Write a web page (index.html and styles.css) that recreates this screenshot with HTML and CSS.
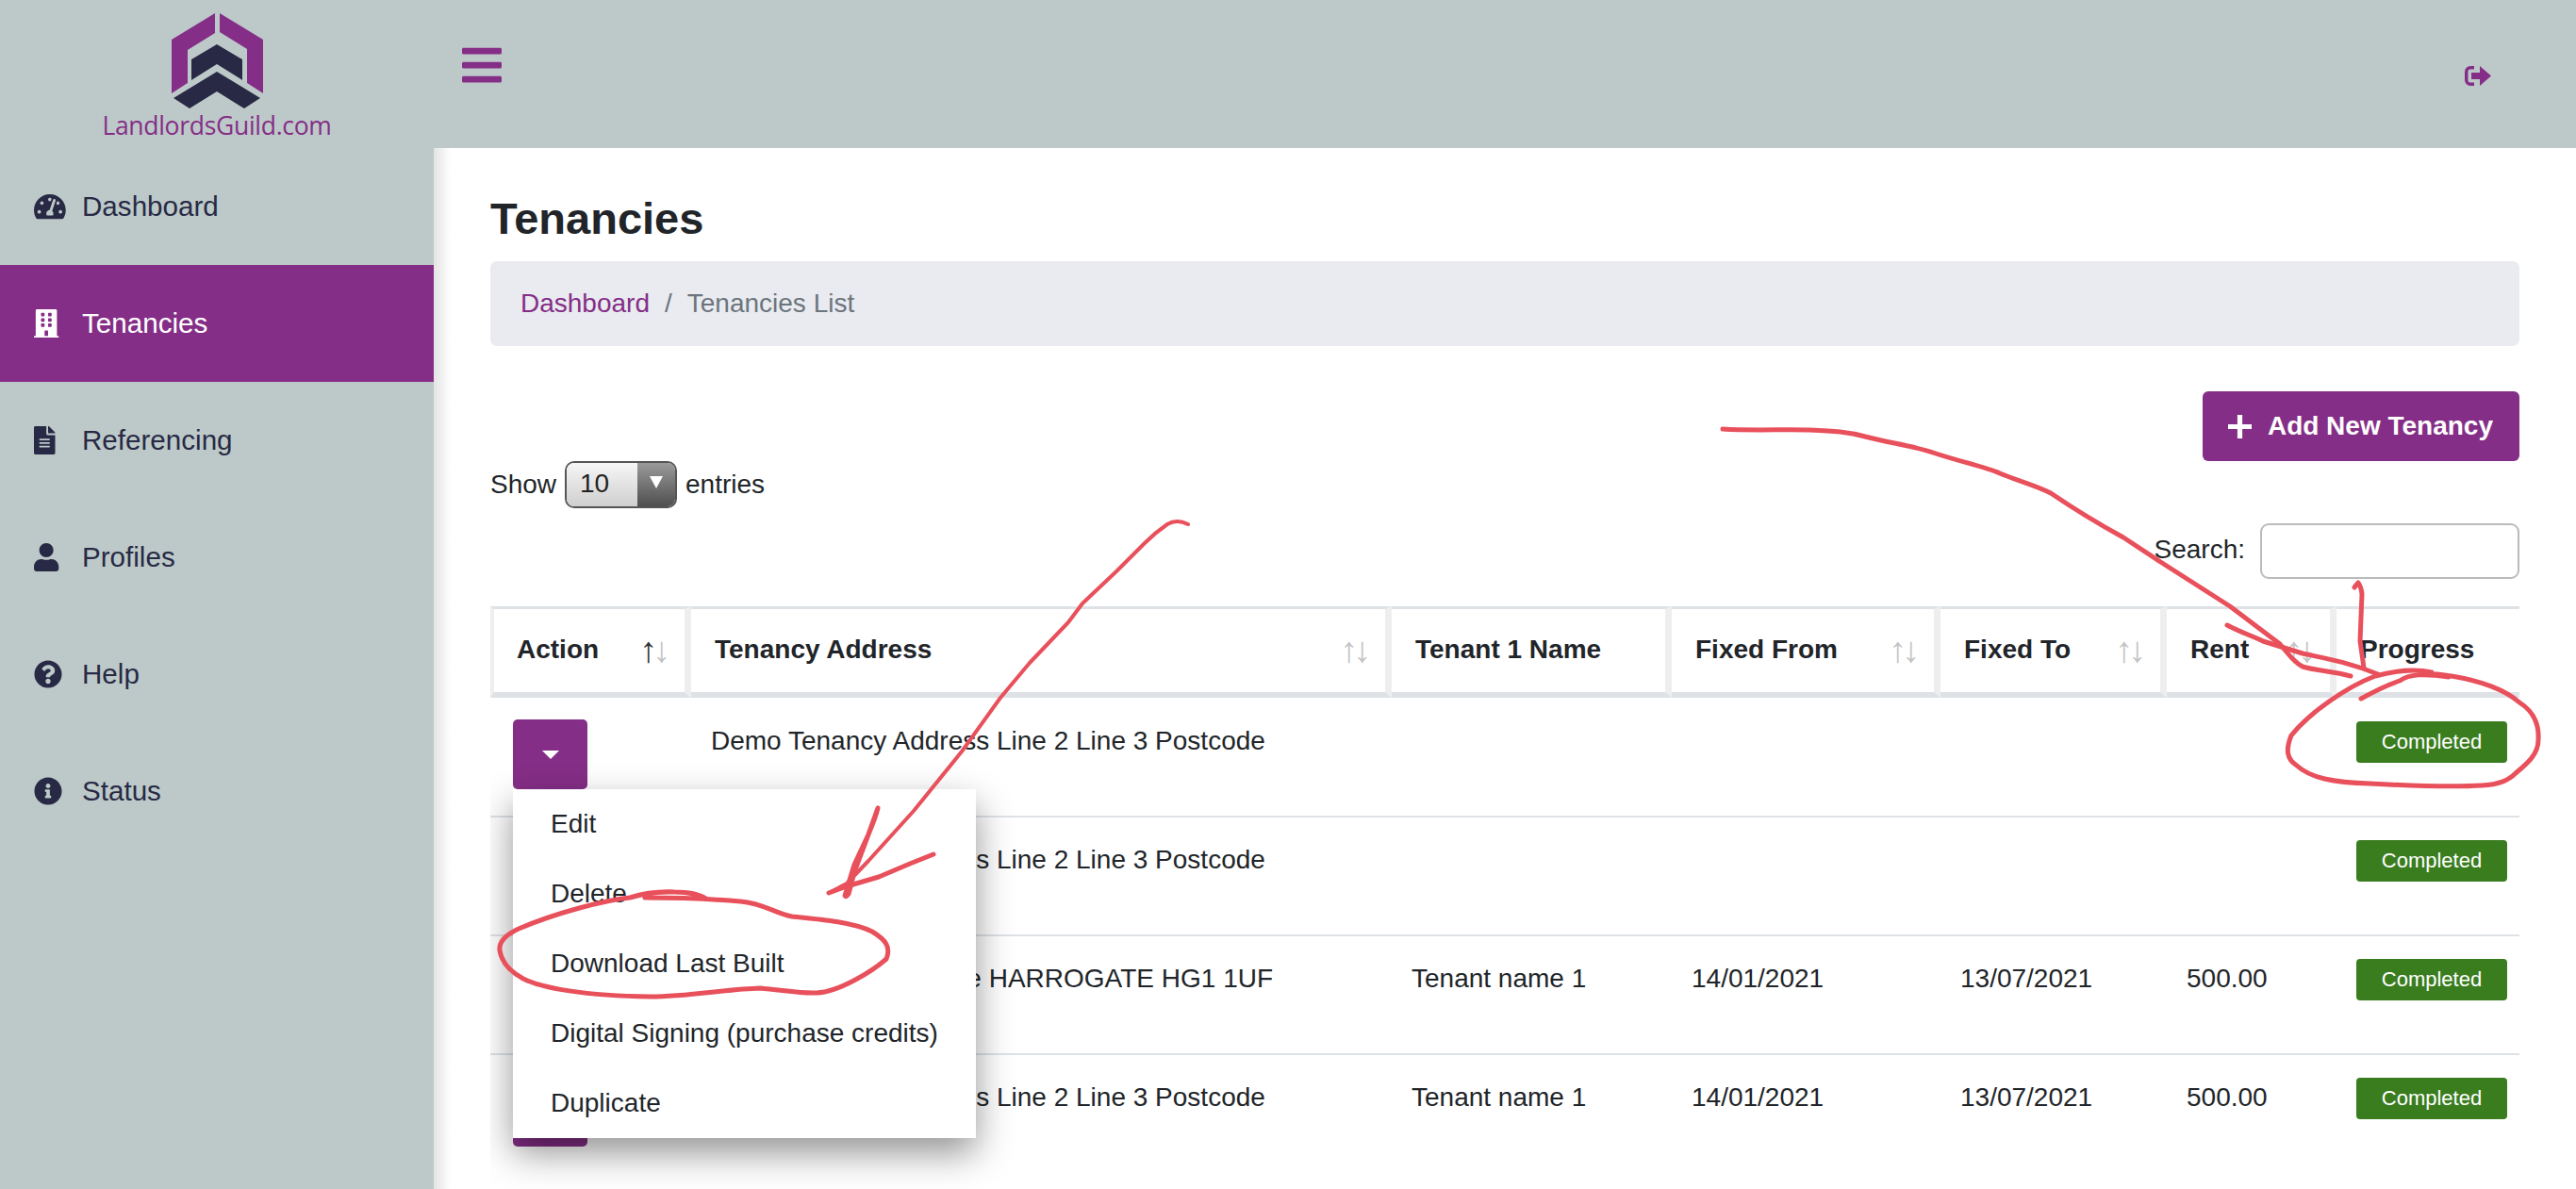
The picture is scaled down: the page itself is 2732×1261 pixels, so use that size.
FILE: index.html
```html
<!DOCTYPE html>
<html>
<head>
<meta charset="utf-8">
<title>Tenancies</title>
<link rel="stylesheet" href="styles.css">
</head>
<body>
<div class="app">
  <aside class="sidebar">
    <div class="logo">
      <svg class="logo-mark" viewBox="182 14 97 101" width="97" height="101">
        <path fill="#852e87" d="M228 14 182 42V99L199 88V53L228 35ZM233 14 279 42V99L262 88V52L233 34Z"/>
        <path fill="#282a45" d="M230 47 257 63V85L230 68 203 85V63ZM230 76 276 104 259 115 230 97 201 115 184 104Z"/>
      </svg>
      <div class="logo-text">LandlordsGuild.com</div>
    </div>
    <nav class="nav">
      <a class="nav-item">
        <svg class="nav-icon" preserveAspectRatio="xMinYMid meet" viewBox="0 0 576 512"><path d="M288 32C128.94 32 0 160.94 0 320c0 52.8 14.25 102.26 39.06 144.8 5.61 9.62 16.3 15.2 27.44 15.2h443c11.14 0 21.83-5.58 27.44-15.2C561.75 422.26 576 372.8 576 320c0-159.06-128.94-288-288-288zm0 64c14.71 0 26.58 10.13 30.32 23.65-1.11 2.26-2.64 4.23-3.45 6.67l-9.22 27.67c-5.13 3.49-10.97 6.01-17.64 6.01-17.67 0-32-14.33-32-32S270.33 96 288 96zM96 384c-17.67 0-32-14.33-32-32s14.33-32 32-32 32 14.33 32 32-14.33 32-32 32zm48-160c-17.67 0-32-14.33-32-32s14.33-32 32-32 32 14.33 32 32-14.33 32-32 32zm246.77-72.41l-61.33 184C343.13 347.33 352 364.54 352 384c0 11.72-3.38 22.55-8.88 32H232.88c-5.5-9.45-8.88-20.28-8.88-32 0-33.94 26.5-61.43 59.9-63.59l61.34-184.01c4.17-12.56 17.73-19.45 30.36-15.17 12.57 4.19 19.35 17.79 15.17 30.36zm14.66 57.2l15.52-46.55c3.47-1.29 7.13-2.23 11.05-2.23 17.67 0 32 14.33 32 32s-14.33 32-32 32c-11.38-.01-20.89-6.28-26.57-15.22zM480 384c-17.67 0-32-14.33-32-32s14.33-32 32-32 32 14.33 32 32-14.33 32-32 32z"/></svg>
        Dashboard
      </a>
      <a class="nav-item active">
        <svg class="nav-icon" preserveAspectRatio="xMinYMid meet" viewBox="0 0 448 512"><path d="M436 480h-20V24c0-13.255-10.745-24-24-24H56C42.745 0 32 10.745 32 24v456H12c-6.627 0-12 5.373-12 12v20h448v-20c0-6.627-5.373-12-12-12zM128 76c0-6.627 5.373-12 12-12h40c6.627 0 12 5.373 12 12v40c0 6.627-5.373 12-12 12h-40c-6.627 0-12-5.373-12-12V76zm0 96c0-6.627 5.373-12 12-12h40c6.627 0 12 5.373 12 12v40c0 6.627-5.373 12-12 12h-40c-6.627 0-12-5.373-12-12v-40zm52 148h-40c-6.627 0-12-5.373-12-12v-40c0-6.627 5.373-12 12-12h40c6.627 0 12 5.373 12 12v40c0 6.627-5.373 12-12 12zm76 160h-64v-84c0-6.627 5.373-12 12-12h40c6.627 0 12 5.373 12 12v84zm64-172c0 6.627-5.373 12-12 12h-40c-6.627 0-12-5.373-12-12v-40c0-6.627 5.373-12 12-12h40c6.627 0 12 5.373 12 12v40zm0-96c0 6.627-5.373 12-12 12h-40c-6.627 0-12-5.373-12-12v-40c0-6.627 5.373-12 12-12h40c6.627 0 12 5.373 12 12v40zm0-96c0 6.627-5.373 12-12 12h-40c-6.627 0-12-5.373-12-12V76c0-6.627 5.373-12 12-12h40c6.627 0 12 5.373 12 12v40z"/></svg>
        Tenancies
      </a>
      <a class="nav-item">
        <svg class="nav-icon" preserveAspectRatio="xMinYMid meet" viewBox="0 0 384 512"><path d="M224 136V0H24C10.7 0 0 10.7 0 24v464c0 13.3 10.7 24 24 24h336c13.3 0 24-10.7 24-24V160H248c-13.2 0-24-10.8-24-24zm64 236c0 6.6-5.4 12-12 12H108c-6.6 0-12-5.4-12-12v-8c0-6.6 5.4-12 12-12h168c6.6 0 12 5.4 12 12v8zm0-64c0 6.6-5.4 12-12 12H108c-6.6 0-12-5.4-12-12v-8c0-6.6 5.4-12 12-12h168c6.6 0 12 5.4 12 12v8zm0-72v8c0 6.6-5.4 12-12 12H108c-6.6 0-12-5.4-12-12v-8c0-6.6 5.4-12 12-12h168c6.6 0 12 5.4 12 12zm96-114.1v6.1H256V0h6.1c6.4 0 12.5 2.5 17 7l97.9 98c4.5 4.5 7 10.6 7 16.9z"/></svg>
        Referencing
      </a>
      <a class="nav-item">
        <svg class="nav-icon" preserveAspectRatio="xMinYMid meet" viewBox="0 0 448 512"><path d="M224 256c70.7 0 128-57.3 128-128S294.7 0 224 0 96 57.3 96 128s57.3 128 128 128zm89.6 32h-16.7c-22.2 10.2-46.9 16-72.9 16s-50.6-5.8-72.9-16h-16.7C60.2 288 0 348.2 0 422.4V464c0 26.5 21.5 48 48 48h352c26.5 0 48-21.5 48-48v-41.6c0-74.2-60.2-134.4-134.4-134.4z"/></svg>
        Profiles
      </a>
      <a class="nav-item">
        <svg class="nav-icon" preserveAspectRatio="xMinYMid meet" viewBox="0 0 512 512"><path d="M504 256c0 136.997-111.043 248-248 248S8 392.997 8 256C8 119.083 119.043 8 256 8s248 111.083 248 248zM262.655 90c-54.497 0-89.255 22.957-116.549 63.758-3.536 5.286-2.353 12.415 2.715 16.258l34.699 26.31c5.205 3.947 12.621 3.008 16.665-2.122 17.864-22.658 30.113-35.797 57.303-35.797 20.429 0 45.698 13.148 45.698 32.958 0 14.976-12.363 22.667-32.534 33.976C247.128 238.528 216 254.941 216 296v4c0 6.627 5.373 12 12 12h56c6.627 0 12-5.373 12-12v-1.333c0-28.462 83.186-29.647 83.186-106.667 0-58.002-60.165-102-116.531-102zM256 338c-25.365 0-46 20.635-46 46 0 25.364 20.635 46 46 46s46-20.636 46-46c0-25.365-20.635-46-46-46z"/></svg>
        Help
      </a>
      <a class="nav-item">
        <svg class="nav-icon" preserveAspectRatio="xMinYMid meet" viewBox="0 0 512 512"><path d="M256 8C119.043 8 8 119.083 8 256c0 136.997 111.043 248 248 248s248-111.003 248-248C504 119.083 392.957 8 256 8zm0 110c23.196 0 42 18.804 42 42s-18.804 42-42 42-42-18.804-42-42 18.804-42 42-42zm56 254c0 6.627-5.373 12-12 12h-88c-6.627 0-12-5.373-12-12v-24c0-6.627 5.373-12 12-12h12v-64h-12c-6.627 0-12-5.373-12-12v-24c0-6.627 5.373-12 12-12h64c6.627 0 12 5.373 12 12v100h12c6.627 0 12 5.373 12 12v24z"/></svg>
        Status
      </a>
    </nav>
  </aside>

  <div class="main">
    <header class="topbar">
      <svg class="menu-icon" viewBox="0 0 448 512"><path d="M16 132h416c8.837 0 16-7.163 16-16V76c0-8.837-7.163-16-16-16H16C7.163 60 0 67.163 0 76v40c0 8.837 7.163 16 16 16zm0 160h416c8.837 0 16-7.163 16-16v-40c0-8.837-7.163-16-16-16H16c-8.837 0-16 7.163-16 16v40c0 8.837 7.163 16 16 16zm0 160h416c8.837 0 16-7.163 16-16v-40c0-8.837-7.163-16-16-16H16c-8.837 0-16 7.163-16 16v40c0 8.837 7.163 16 16 16z"/></svg>
      <svg class="logout-icon" viewBox="0 0 28 21"><path d="M10 0H6a6 6 0 0 0-6 6v9a6 6 0 0 0 6 6h4v-3.500H6A2.500 2.500 0 0 1 3.500 15V6A2.500 2.500 0 0 1 6 3.500h4zM7 7h9V0l12 10.500L16 21v-7H7z"/></svg>
    </header>

    <section class="content">
      <h1 class="page-title">Tenancies</h1>
      <div class="breadcrumb">
        <a class="crumb-link">Dashboard</a>
        <span class="crumb-sep">/</span>
        <span class="crumb-here">Tenancies List</span>
      </div>

      <div class="actions">
        <a class="btn-add">
          <svg class="plus-icon" viewBox="0 0 24 24"><path d="M9.500 0h5v9.500H24v5h-9.500V24h-5v-9.500H0v-5h9.500z"/></svg>
          Add New Tenancy
        </a>
      </div>

      <div class="dt-tools">
        <div class="dt-length">
          Show
          <div class="len-select">
            <span class="len-value">10</span>
            <span class="len-arrow"></span>
          </div>
          entries
        </div>
        <label class="dt-search"><span class="search-label">Search:</span> <input type="text" class="search-box"></label>
      </div>

      <div class="table-wrap">
        <table class="tenancy-table">
          <colgroup>
            <col class="col-action"><col class="col-address"><col class="col-tenant"><col class="col-from"><col class="col-to"><col class="col-rent"><col class="col-progress">
          </colgroup>
          <thead>
            <tr>
              <th><div class="th-in">Action<span class="sort"><span class="on">↑</span>↓</span></div></th>
              <th><div class="th-in">Tenancy Address<span class="sort">↑↓</span></div></th>
              <th><div class="th-in">Tenant 1 Name</div></th>
              <th><div class="th-in">Fixed From<span class="sort">↑↓</span></div></th>
              <th><div class="th-in">Fixed To<span class="sort">↑↓</span></div></th>
              <th><div class="th-in">Rent<span class="sort">↑↓</span></div></th>
              <th><div class="th-in">Progress</div></th>
            </tr>
          </thead>
          <tbody>
            <tr>
              <td class="cell-action">
                <a class="btn-menu"><span class="caret"></span></a>
                <ul class="menu">
                  <li>Edit</li>
                  <li>Delete</li>
                  <li>Download Last Built</li>
                  <li>Digital Signing (purchase credits)</li>
                  <li>Duplicate</li>
                </ul>
              </td>
              <td>Demo Tenancy Address Line 2 Line 3 Postcode</td>
              <td></td><td></td><td></td><td></td>
              <td><span class="badge">Completed</span></td>
            </tr>
            <tr>
              <td class="cell-action"><a class="btn-menu"><span class="caret"></span></a></td>
              <td>Demo Tenancy Address Line 2 Line 3 Postcode</td>
              <td></td><td></td><td></td><td></td>
              <td><span class="badge">Completed</span></td>
            </tr>
            <tr>
              <td class="cell-action"><a class="btn-menu"><span class="caret"></span></a></td>
              <td>Demo Tenancy Avenue HARROGATE HG1 1UF</td>
              <td>Tenant name 1</td><td>14/01/2021</td><td>13/07/2021</td><td>500.00</td>
              <td><span class="badge">Completed</span></td>
            </tr>
            <tr>
              <td class="cell-action"><a class="btn-menu"><span class="caret"></span></a></td>
              <td>Demo Tenancy Address Line 2 Line 3 Postcode</td>
              <td>Tenant name 1</td><td>14/01/2021</td><td>13/07/2021</td><td>500.00</td>
              <td><span class="badge">Completed</span></td>
            </tr>
          </tbody>
        </table>
      </div>
    </section>
  </div>
</div>

<!-- hand drawn notes on top of the screenshot -->
<svg class="scribbles" viewBox="0 0 2732 1261" width="2732" height="1261">
  <!-- arrow to the menu -->
  <path class="thin" d="M1260 556Q1248 550 1238 556Q1225 565 1214 576L1184 606 1148 640 1133 660 1092 703 1061 740 1020 797 969 860 921 913 898 937 879 947"/>
  <path d="M879 947L898 940 932 930 965 916 990 906"/>
  <path d="M931 857Q929 866 921 885L906 917 896 950Q897 952 900 948L906 925 921 885 931 857"/>
  <!-- ring round Download Last Built -->
  <path d="M749 953Q738 946 715 946Q690 945 668 952C640 955 590 968 550 985C535 992 529 1000 530 1008C532 1020 540 1030 555 1038C575 1048 620 1056 690 1057C730 1057 770 1049 806 1048C830 1050 850 1054 866 1053C890 1052 925 1030 940 1017C945 1005 940 997 925 988C905 978 870 975 840 972C820 968 810 958 785 956C750 953 715 952 684 952"/>
  <!-- arrow to the progress badge -->
  <path d="M1827 455C1860 457 1895 455 1919 456C1945 457 1960 458 1978 463C2005 470 2030 473 2050 480C2080 490 2105 495 2121 502C2140 510 2160 515 2175 523C2200 540 2230 558 2252 570L2293 597 2365 643 2418 683C2428 695 2434 703 2442 707C2455 711 2475 712 2493 717"/>
  <path d="M2362 663C2375 670 2390 675 2400 680L2442 693C2465 698 2490 702 2522 715"/>
  <path d="M2497 623Q2499 620 2501 618Q2504 622 2505 630L2503 680 2507 708"/>
  <path d="M2504 741C2520 732 2530 727 2545 722C2555 715 2570 714 2597 718"/>
  <path d="M2579 713C2565 710 2545 710 2519 717C2490 728 2450 755 2430 780C2424 795 2425 805 2436 812C2450 825 2475 830 2513 831C2550 833 2600 835 2632 833C2650 832 2660 828 2668 820C2680 810 2692 800 2692 785C2693 770 2688 755 2672 745C2655 730 2630 722 2600 717C2585 715 2580 714 2573 715"/>
</svg>
</body>
</html>
```
FILE: styles.css
```css
*{box-sizing:border-box;}
html,body{margin:0;padding:0;height:100%;}
body{
font-family:"Liberation Sans",Arial,sans-serif;
font-size:28px;
line-height:1.5;
color:#212529;
background:#fff;
overflow:hidden;
}
.app{display:flex;height:1261px;position:relative;}

/* sidebar */
.sidebar{width:460px;flex:none;background:#bdc9c9;}
.logo{height:157px;display:flex;flex-direction:column;align-items:center;padding-top:14px;}
.logo-mark{display:block;flex:none;margin-left:1px;}
.logo-text{
font-family:"Open Sans",sans-serif;
font-weight:400;
font-size:26.500px;
line-height:30px;
letter-spacing:-.3px;
color:#852e87;
margin-top:3px;
}
.nav-item{
height:124px;
display:flex;
align-items:center;
padding-left:36px;
font-size:29.600px;
color:#282a45;
}
.nav-item.active{background:#852e87;color:#fff;}
.nav-icon{width:34px;height:30px;margin-right:17px;fill:currentColor;flex:none;}

/* top bar */
.main{flex:1;display:flex;flex-direction:column;min-width:0;}
.topbar{
height:157px;
flex:none;
background:#bdc9c9;
display:flex;
align-items:flex-start;
justify-content:space-between;
padding:45px 90px 0 30px;
}
.menu-icon{width:42px;height:48px;fill:#852e87;}
.logout-icon{width:28px;height:21px;fill:#852e87;margin-top:25px;}

/* content */
.content{
flex:1;
min-height:0;
display:flex;
flex-direction:column;
padding:0 60px;
background:linear-gradient(to right,#e4e4e4,#fff 18px);
}
.page-title{font-size:47px;font-weight:700;line-height:56px;margin:47px 0 17px;}
.breadcrumb{
height:90px;
flex:none;
display:flex;
align-items:center;
padding-left:32px;
background:#e9ebf0;
border-radius:7px;
color:#6c757d;
}
.crumb-link{color:#852e87;}
.crumb-sep{margin:0 16px;}
.actions{display:flex;justify-content:flex-end;margin-top:48px;flex:none;}
.btn-add{
height:74px;
display:flex;
align-items:center;
padding:0 28px 0 27px;
background:#852e87;
color:#fff;
font-weight:700;
border-radius:6px;
}
.plus-icon{width:25px;height:25px;fill:#fff;margin-right:17px;}

.dt-tools{display:flex;justify-content:space-between;align-items:flex-start;flex:none;}
.dt-length{display:flex;align-items:center;height:50px;gap:9px;}
.len-select{
width:119px;
height:50px;
display:flex;
border:2px solid #555;
border-radius:10px;
overflow:hidden;
}
.len-value{
flex:1;
padding-left:14px;
line-height:44px;
background:linear-gradient(#f6f6f6,#cfcfcf);
color:#222;
}
.len-arrow{
width:40px;
background:linear-gradient(#9a9a9a,#4f4f4f);
display:flex;
align-items:center;
justify-content:center;
}
.len-arrow::after{
content:"";
border-left:7px solid transparent;
border-right:7px solid transparent;
border-top:13px solid #fff;
margin-bottom:6px;
}
.dt-search{display:flex;align-items:center;gap:16px;margin-top:66px;}
.search-label{margin-top:-4px;}
.search-box{
width:275px;
height:59px;
border:2px solid #bbb;
border-radius:9px;
background:#fff;
outline:none;
}

/* table */
.table-wrap{flex:1;min-height:0;overflow:hidden;margin-top:29px;}
.tenancy-table{
width:2152px;
table-layout:fixed;
border-collapse:separate;
border-spacing:0;
}
.col-action{width:213px;}
.col-address{width:743px;}
.col-tenant{width:297px;}
.col-from{width:285px;}
.col-to{width:240px;}
.col-rent{width:180px;}
.col-progress{width:194px;}
.tenancy-table th{
height:97px;
padding:0 10px 0 25px;
border-top:3px solid #dee2e6;
border-bottom:6px solid #dee2e6;
border-right:7px solid #eee;
text-align:left;
font-weight:700;
}
.tenancy-table th:first-child{border-left:4px solid #eee;padding-left:24px;}
.tenancy-table th:last-child{border-right:0;}
.th-in{display:flex;justify-content:space-between;align-items:center;margin-top:-3px;white-space:nowrap;height:42px;}
.sort{color:#c4c4c4;font-weight:400;font-size:38px;line-height:1;letter-spacing:-5px;margin-right:10px;}
.sort .on{color:#333;}
.tenancy-table td{
height:126px;
padding:24px 10px 0 21px;
vertical-align:top;
border-bottom:2px solid #dee2e6;
}
.tenancy-table tbody tr:first-child td{height:127px;padding-top:25px;}
.tenancy-table tbody tr:last-child td{border-bottom:0;}
.tenancy-table td.cell-action,
.tenancy-table tbody tr:first-child td.cell-action{padding:23px 0 0 24px;position:relative;}
.btn-menu{
display:flex;
width:79px;
height:74px;
align-items:center;
justify-content:center;
background:#852e87;
border-radius:5px;
}
.caret{
border-left:9px solid transparent;
border-right:9px solid transparent;
border-top:9px solid #fff;
}
.menu{
position:absolute;
left:24px;
top:97px;
z-index:5;
width:491px;
margin:0;
padding:0;
list-style:none;
background:#fff;
box-shadow:0 16px 36px rgba(0,0,0,.42);
}
.menu li{height:74px;line-height:74px;padding-left:40px;white-space:nowrap;}
.badge{
display:block;
width:160px;
height:44px;
background:#3a7d1f;
color:#fff;
border-radius:4px;
font-size:22px;
line-height:44px;
text-align:center;
}

/* annotations */
.scribbles{
position:absolute;
left:0;
top:0;
z-index:10;
fill:none;
stroke:#e8505b;
stroke-width:5;
stroke-linecap:round;
stroke-linejoin:round;
pointer-events:none;
}
.scribbles .thin{stroke-width:4;}
```
